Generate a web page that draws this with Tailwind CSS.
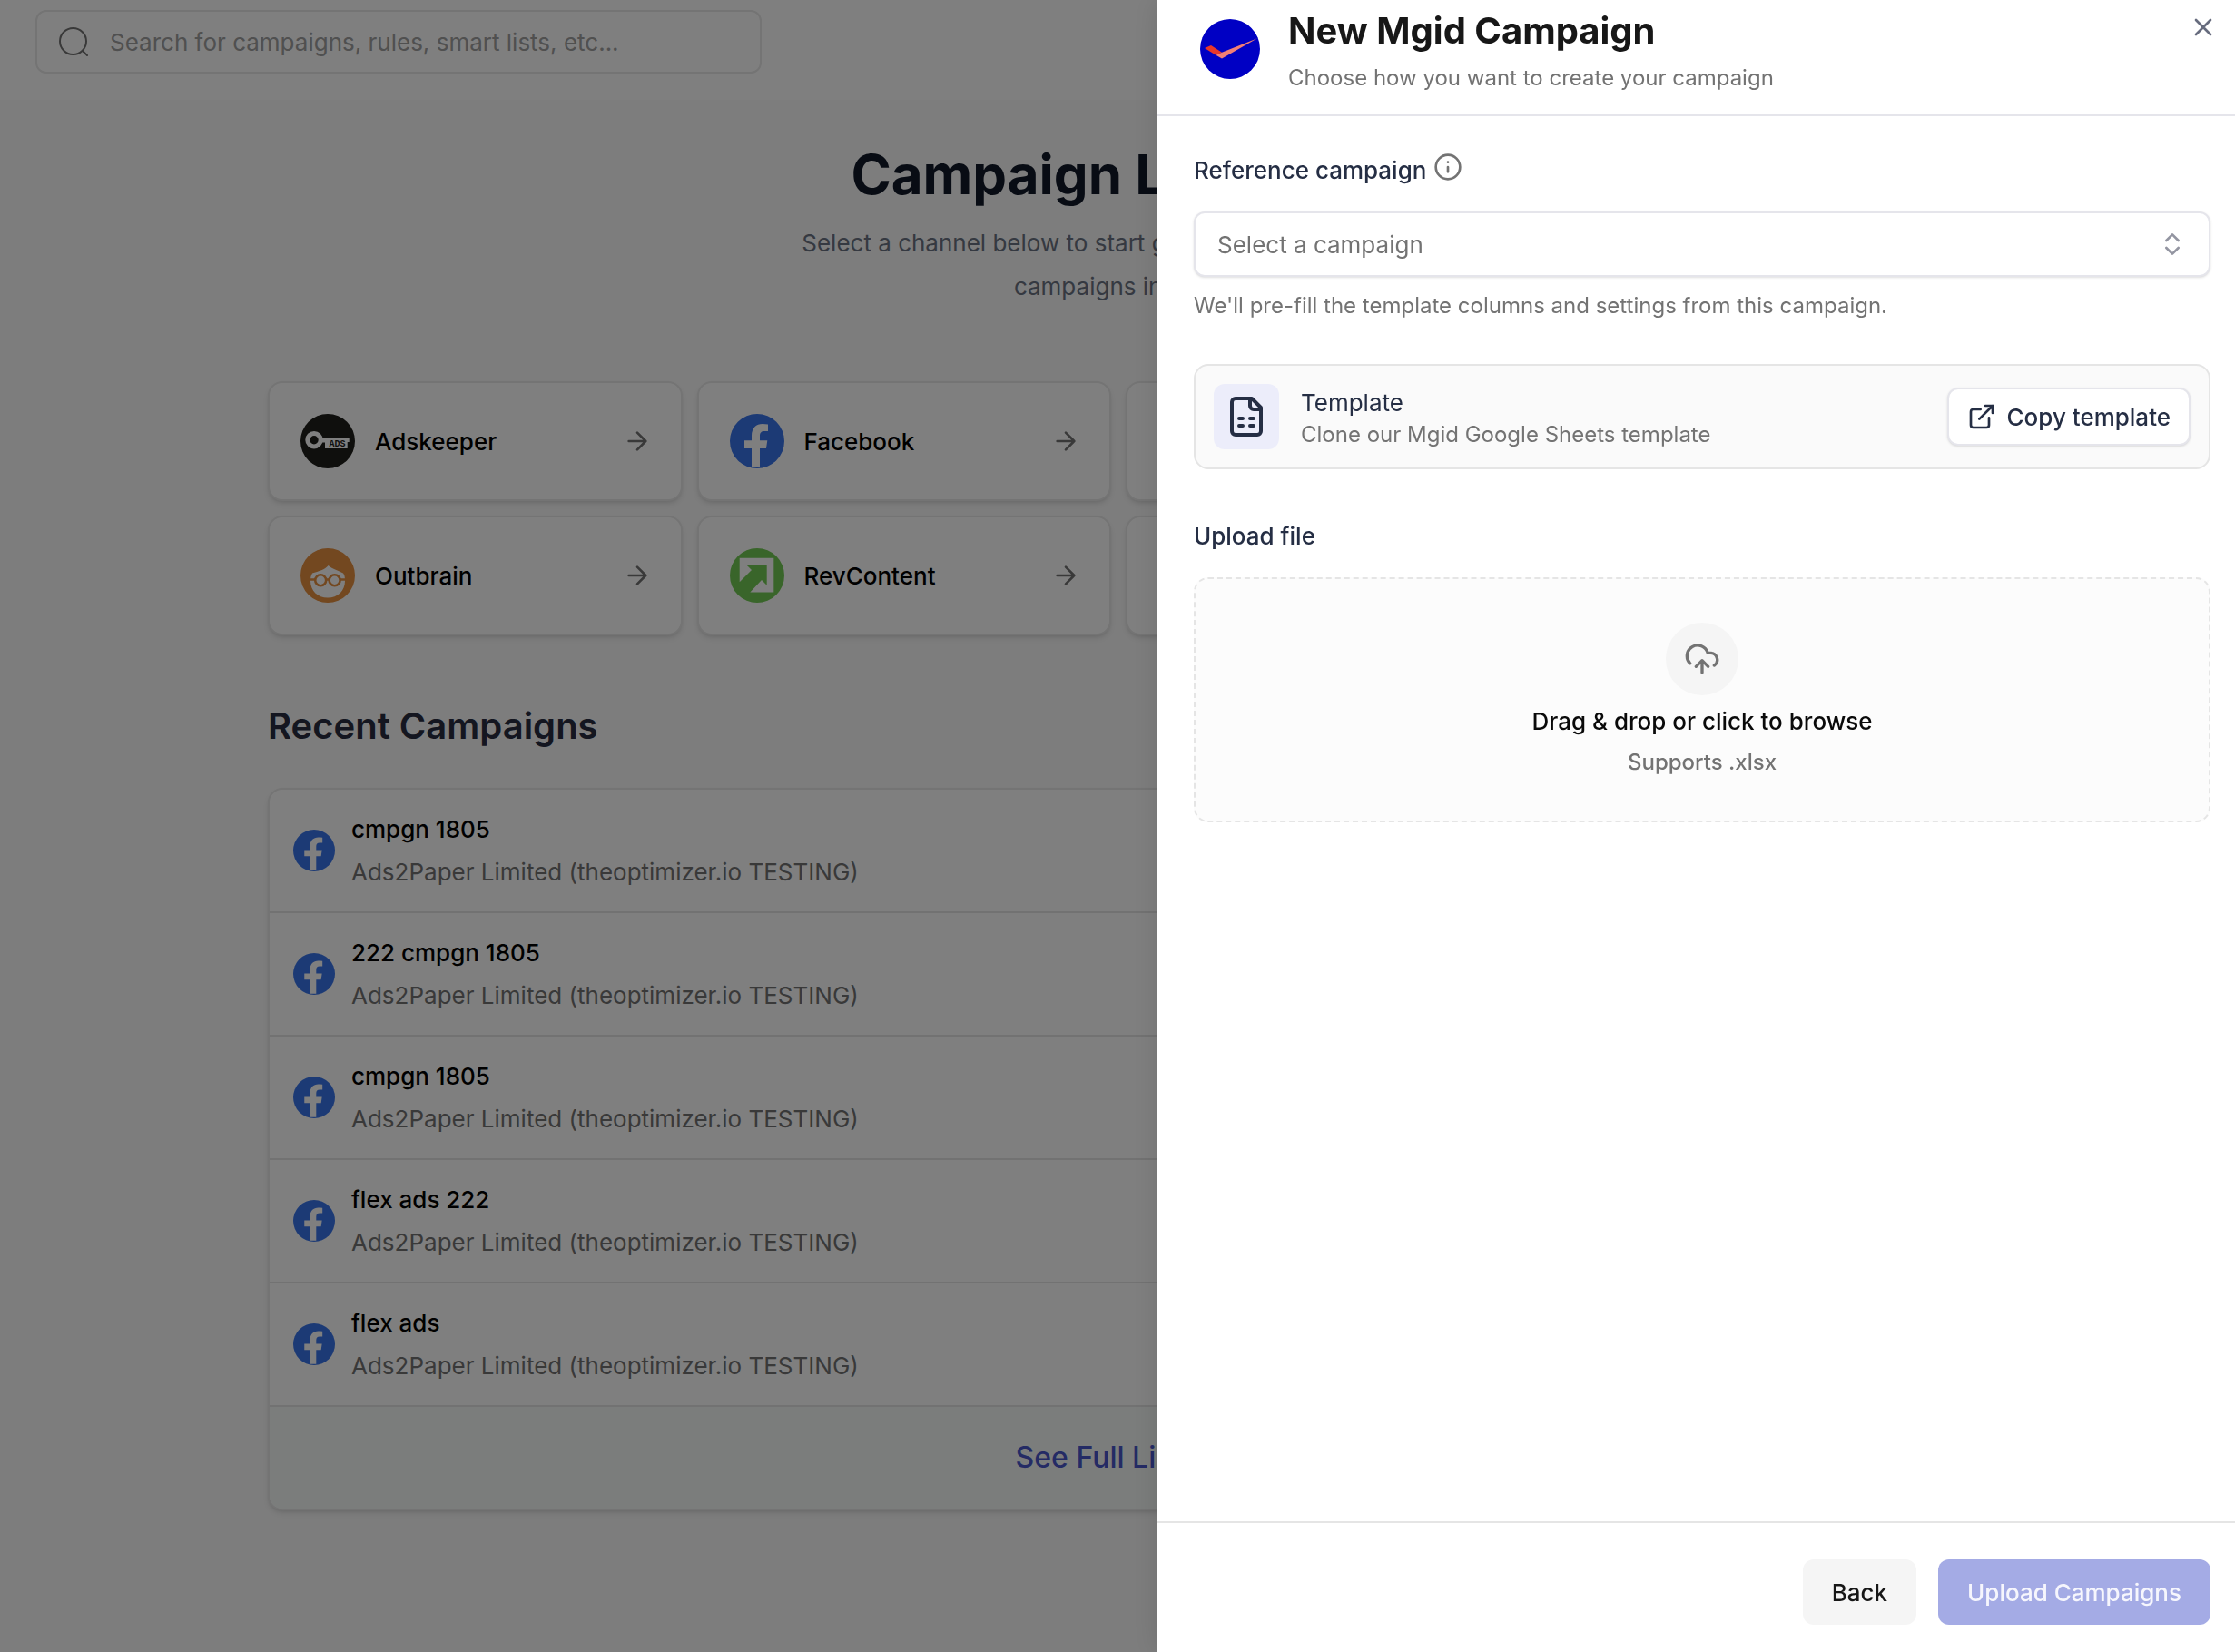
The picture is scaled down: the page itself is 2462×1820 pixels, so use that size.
<!DOCTYPE html>
<html lang="en">
<head>
<meta charset="utf-8">
<meta name="viewport" content="width=device-width, initial-scale=1">
<title>New Mgid Campaign</title>
<script src="https://cdn.jsdelivr.net/npm/@tailwindcss/browser@4"></script>
</head>
<body class="h-screen overflow-hidden bg-[#fafafa] font-['Inter',sans-serif] text-[26px] text-neutral-950 antialiased">
<svg class="hidden" aria-hidden="true">
  <symbol id="arrow" viewBox="0 0 24 24"><path d="M5 12h14M12 5l7 7-7 7" fill="none" stroke="currentColor" stroke-width="2" stroke-linecap="round" stroke-linejoin="round"/></symbol>
  <symbol id="facebook" viewBox="0 0 60 60"><circle cx="30" cy="30" r="30" fill="#3874ea"/><path fill="#fff" d="M24 58.500V38H16V29.300H24V24C24 15.500 29 11 36 11C38 11 40 11.200 42 11.500V19H38C34.500 19 33 21 33 24V29.300H41.300L40 38H33V58.500Z"/></symbol>
</svg>

<!-- Page -->
<header class="flex h-[110px] items-start bg-white px-[39px] pt-[11px]">
  <div class="flex h-[70px] w-[800px] items-center gap-6 rounded-xl border-2 border-[#e8e8e8] px-6">
    <svg class="size-8 shrink-0 text-neutral-500" viewBox="0 0 32 32" fill="none" stroke="currentColor" stroke-width="2" stroke-linecap="round"><circle cx="15.500" cy="15.500" r="14.500"/><path d="m26.500 26.500 4.500 4.500"/></svg>
    <input type="search" aria-label="Search" placeholder="Search for campaigns, rules, smart lists, etc..." class="min-w-0 grow bg-transparent outline-none placeholder:text-[#a0a0a0]">
  </div>
</header>

<main class="mx-auto max-w-[1876px] pt-[46px] pl-[2px]">
  <div class="text-center">
    <h1 class="text-[60px] leading-[72px] font-bold text-gray-900">Campaign Launcher</h1>
    <p class="mt-4 leading-[48px] text-gray-500">Select a channel below to start generating and launching<br>campaigns in bulk.</p>
  </div>

  <div class="mt-20 grid grid-cols-4 gap-4">
    <a href="#" class="flex h-[132px] items-center gap-[22px] rounded-2xl border-2 border-[#e8e8e8] bg-white pr-8 pl-[34px] font-medium text-black shadow-md">
      <svg class="size-[60px]" viewBox="0 0 60 60"><circle cx="30" cy="30" r="30" fill="#1e1e1a"/><circle cx="15" cy="28.700" r="7.200" fill="none" stroke="#fff" stroke-width="5"/><path fill="#fff" d="M23 26H53.700V31H51.700V38H27V31.500H23Z"/><text x="31.500" y="35.500" font-family="Liberation Mono, monospace" font-weight="700" font-size="10" fill="#1e1e1a">ADS</text></svg>
      <span class="grow">Adskeeper</span>
      <svg class="size-8 text-neutral-500"><use href="#arrow"/></svg>
    </a>
    <a href="#" class="flex h-[132px] items-center gap-[22px] rounded-2xl border-2 border-[#e8e8e8] bg-white pr-8 pl-[34px] font-medium text-black shadow-md">
      <svg class="size-[60px]"><use href="#facebook"/></svg>
      <span class="grow">Facebook</span>
      <svg class="size-8 text-neutral-500"><use href="#arrow"/></svg>
    </a>
    <div class="h-[132px] rounded-2xl border-2 border-[#e8e8e8] bg-white shadow-md"></div>
    <div class="h-[132px] rounded-2xl border-2 border-[#e8e8e8] bg-white shadow-md"></div>
    <a href="#" class="flex h-[132px] items-center gap-[22px] rounded-2xl border-2 border-[#e8e8e8] bg-white pr-8 pl-[34px] font-medium text-black shadow-md">
      <svg class="size-[60px]" viewBox="0 0 60 60"><circle cx="30" cy="30" r="30" fill="#e69040"/><path fill="#fff" d="M30.700 19C33 22 40 24 47 27.500C48.500 29 49 32 49 36C49 47 41 54.500 30 54.500C19 54.500 11 47 11 36C11 33 11.500 30 13 27.500C20 25.500 27 23.500 30.700 19Z"/><g fill="none" stroke="#e69040" stroke-width="2.600"><circle cx="22.200" cy="35.300" r="6"/><circle cx="37.600" cy="35.300" r="6"/><path d="M9 34.500h7M44 34.500h7M28 34.500h4"/></g></svg>
      <span class="grow">Outbrain</span>
      <svg class="size-8 text-neutral-500"><use href="#arrow"/></svg>
    </a>
    <a href="#" class="flex h-[132px] items-center gap-[22px] rounded-2xl border-2 border-[#e8e8e8] bg-white pr-8 pl-[34px] font-medium text-black shadow-md">
      <svg class="size-[60px]" viewBox="0 0 60 60"><circle cx="30" cy="30" r="30" fill="#72ca54"/><path fill="#fff" d="M10.700 10.700H48.300V48.500H22.300L35 35L40.700 40.700V18.700H18.700L24 24L10.700 37.300Z"/></svg>
      <span class="grow">RevContent</span>
      <svg class="size-8 text-neutral-500"><use href="#arrow"/></svg>
    </a>
    <div class="h-[132px] rounded-2xl border-2 border-[#e8e8e8] bg-white shadow-md"></div>
    <div class="h-[132px] rounded-2xl border-2 border-[#e8e8e8] bg-white shadow-md"></div>
  </div>

  <h2 class="mt-[76px] text-[40px] leading-[48px] font-semibold text-[#282c40]">Recent Campaigns</h2>
  <section class="mt-11 overflow-hidden rounded-2xl border-2 border-[#e8e8e8] bg-white shadow-md">
    <ul>
      <li class="flex h-[136px] items-center gap-[18px] border-b-2 border-[#e5e5e5] px-[26px]">
        <svg class="size-[46px]"><use href="#facebook"/></svg>
        <div class="leading-[47px]"><p class="font-medium text-black">cmpgn 1805</p><p class="text-neutral-500">Ads2Paper Limited (theoptimizer.io TESTING)</p></div>
      </li>
      <li class="flex h-[136px] items-center gap-[18px] border-b-2 border-[#e5e5e5] px-[26px]">
        <svg class="size-[46px]"><use href="#facebook"/></svg>
        <div class="leading-[47px]"><p class="font-medium text-black">222 cmpgn 1805</p><p class="text-neutral-500">Ads2Paper Limited (theoptimizer.io TESTING)</p></div>
      </li>
      <li class="flex h-[136px] items-center gap-[18px] border-b-2 border-[#e5e5e5] px-[26px]">
        <svg class="size-[46px]"><use href="#facebook"/></svg>
        <div class="leading-[47px]"><p class="font-medium text-black">cmpgn 1805</p><p class="text-neutral-500">Ads2Paper Limited (theoptimizer.io TESTING)</p></div>
      </li>
      <li class="flex h-[136px] items-center gap-[18px] border-b-2 border-[#e5e5e5] px-[26px]">
        <svg class="size-[46px]"><use href="#facebook"/></svg>
        <div class="leading-[47px]"><p class="font-medium text-black">flex ads 222</p><p class="text-neutral-500">Ads2Paper Limited (theoptimizer.io TESTING)</p></div>
      </li>
      <li class="flex h-[136px] items-center gap-[18px] border-b-2 border-[#e5e5e5] px-[26px]">
        <svg class="size-[46px]"><use href="#facebook"/></svg>
        <div class="leading-[47px]"><p class="font-medium text-black">flex ads</p><p class="text-neutral-500">Ads2Paper Limited (theoptimizer.io TESTING)</p></div>
      </li>
    </ul>
    <a href="#" class="flex h-[112px] items-center justify-center gap-3 bg-[#f7fbf9] text-[32px] font-medium text-[#4957cb]">See Full List <svg class="size-8"><use href="#arrow"/></svg></a>
  </section>
</main>

<!-- Drawer -->
<div class="fixed inset-0 flex justify-end bg-black/50">
  <div role="dialog" aria-labelledby="drawer-title" class="flex h-full w-[1187px] max-w-full flex-col bg-white shadow-[0_0_30px_rgb(0_0_0/0.12)]">
    <header class="flex items-start border-b-2 border-[#e5e5eb] pt-[6px] pr-[19px] pb-4 pl-[47px]">
      <svg class="mt-[15px] size-[66px] shrink-0" viewBox="0 0 66 66"><circle cx="33" cy="33" r="33" fill="#0000c4"/><path fill="#e8372a" d="M5 32 12 29 24 36.700 17.400 39.700Z"/><path fill="#f17f76" d="M17.400 39.700 24 36.700 63 21.300 24 43.500Z"/></svg>
      <div class="ml-[31px] grow">
        <h2 id="drawer-title" class="text-[40px] leading-[56px] font-bold text-neutral-900">New Mgid Campaign</h2>
        <p class="text-[24px] leading-[48px] text-neutral-500">Choose how you want to create your campaign</p>
      </div>
      <button type="button" aria-label="Close" class="mt-2 text-[#676c7e]"><svg class="size-8" viewBox="0 0 24 24" fill="none" stroke="currentColor" stroke-width="2" stroke-linecap="round"><path d="M18 6 6 18M6 6l12 12"/></svg></button>
    </header>

    <div class="grow pt-10 pr-[27px] pl-10">
      <div class="flex items-start gap-2">
        <label for="reference" class="leading-[40px] font-medium text-[#252e44]">Reference campaign</label>
        <button type="button" aria-label="About the reference campaign" class="text-neutral-500"><svg class="size-8" viewBox="0 0 24 24" fill="none" stroke="currentColor" stroke-width="2" stroke-linecap="round"><circle cx="12" cy="12" r="10"/><path d="M12 16v-4M12 8h.01"/></svg></button>
      </div>
      <div class="relative mt-[25px]">
        <select id="reference" class="block h-[72px] w-full appearance-none rounded-xl border-2 border-[#e5e5eb] bg-white px-6 text-neutral-500 shadow-sm"><option>Select a campaign</option></select>
        <svg class="pointer-events-none absolute inset-y-5 right-[26px] size-8 text-[#9395a1]" viewBox="0 0 24 24" fill="none" stroke="currentColor" stroke-width="2" stroke-linecap="round" stroke-linejoin="round"><path d="m7 15 5 5 5-5M7 9l5-5 5 5"/></svg>
      </div>
      <p class="mt-[14px] text-[24px] leading-[36px] text-neutral-500">We'll pre-fill the template columns and settings from this campaign.</p>

      <div class="mt-[46px] flex h-[116px] items-center rounded-2xl border-2 border-neutral-200 bg-neutral-50 px-5">
        <div class="flex size-[72px] items-center justify-center rounded-xl bg-[#ecedfa] text-[#252e44]">
          <svg class="size-12" viewBox="0 0 24 24" fill="none" stroke="currentColor" stroke-width="2" stroke-linecap="round" stroke-linejoin="round"><path d="M15 2H6a2 2 0 0 0-2 2v16a2 2 0 0 0 2 2h12a2 2 0 0 0 2-2V7Z"/><path d="M14 2v4a2 2 0 0 0 2 2h4M8 13h2M14 13h2M8 17h2M14 17h2"/></svg>
        </div>
        <div class="ml-6 grow pt-1 leading-[35px]">
          <p class="text-[#252e44]">Template</p>
          <p class="text-[24px] text-neutral-500">Clone our Mgid Google Sheets template</p>
        </div>
        <button type="button" class="flex h-16 items-center gap-3 rounded-xl border-2 border-[#e5e5eb] bg-white px-5 font-medium text-[#252e44] shadow-sm">
          <svg class="size-8" viewBox="0 0 24 24" fill="none" stroke="currentColor" stroke-width="2" stroke-linecap="round"><path d="M15 3h6v6M10 14 21 3M18 13v6a2 2 0 0 1-2 2H5a2 2 0 0 1-2-2V8a2 2 0 0 1 2-2h6"/></svg>
          Copy template
        </button>
      </div>

      <p class="mt-[54px] leading-[40px] font-medium text-[#252e44]">Upload file</p>
      <label class="mt-[25px] flex flex-col items-center rounded-2xl border-2 border-dashed border-neutral-200 bg-[#fcfcfc] pt-12 pb-[46px] font-medium">
        <span class="flex size-20 items-center justify-center rounded-full bg-neutral-100 text-neutral-500">
          <svg class="size-10" viewBox="0 0 24 24" fill="none" stroke="currentColor" stroke-width="2" stroke-linecap="round" stroke-linejoin="round"><path d="M12 13v8M4 14.899A7 7 0 1 1 15.710 8h1.790a4.500 4.500 0 0 1 2.500 8.242M8 17l4-4 4 4"/></svg>
        </span>
        <span class="mt-[11px] leading-[36px]">Drag &amp; drop or click to browse</span>
        <span class="mt-[9px] text-[24px] leading-[36px] text-neutral-500">Supports .xlsx</span>
        <input type="file" accept=".xlsx" class="sr-only">
      </label>
    </div>

    <footer class="flex justify-end gap-6 border-t-2 border-neutral-200 pt-10 pr-[27px] pb-[30px] font-medium">
      <button type="button" class="h-[72px] rounded-xl bg-neutral-100 px-8 text-neutral-900">Back</button>
      <button type="button" disabled class="h-[72px] rounded-xl bg-[#a4abe5] px-8 text-[#f6f6fd]">Upload Campaigns</button>
    </footer>
  </div>
</div>
</body>
</html>
